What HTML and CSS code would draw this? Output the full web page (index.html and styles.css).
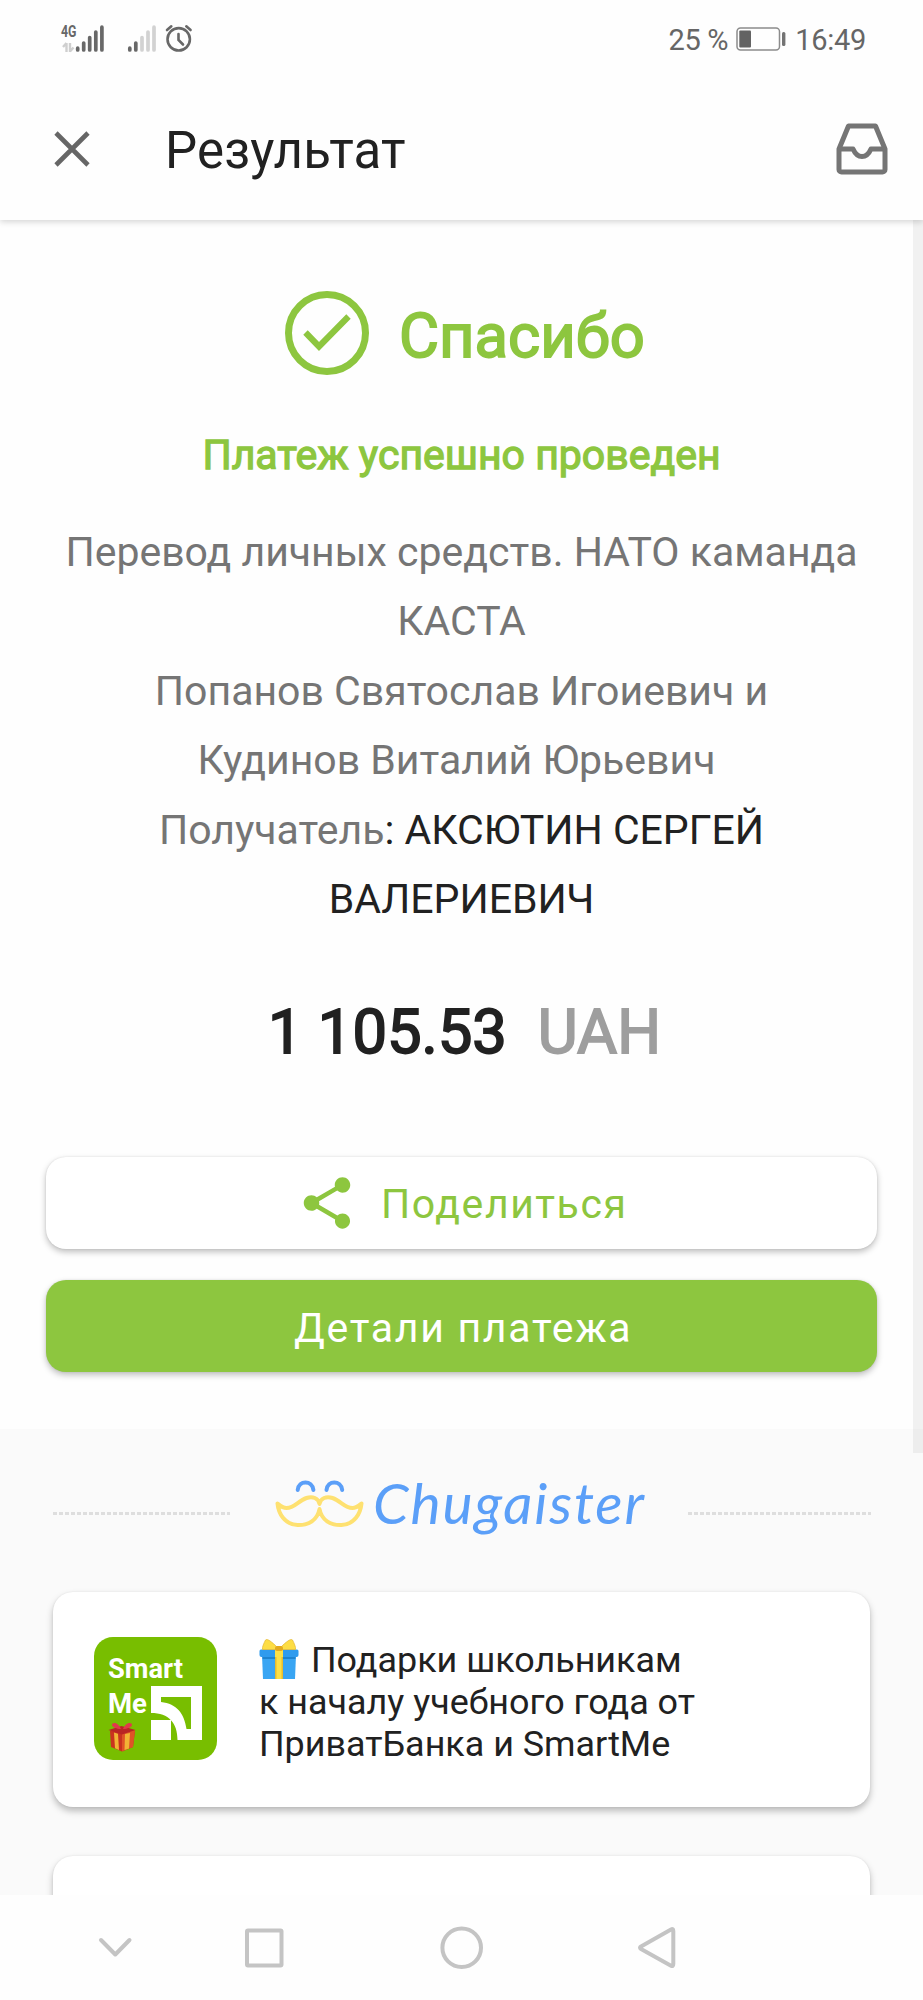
FILE: index.html
```html
<!DOCTYPE html>
<html lang="ru">
<head>
<meta charset="utf-8">
<title>Результат</title>
<link rel="stylesheet" href="styles.css">
</head>
<body>
<div class="screen">
  <div class="status">
    <svg class="status-left" width="160" height="32" viewBox="50 22 160 32">
      <text class="net" x="61" y="37" textLength="15.5" lengthAdjust="spacingAndGlyphs">4G</text>
      <g stroke="#cfcfcf" stroke-width="2.4" fill="none"><path d="M66.5 43v9M66.5 43l-3.5 4M70 43v9M70 51.500l3.500-4"/></g>
      <g stroke="#686868" stroke-width="3.7" stroke-linecap="round"><path d="M77.700 48.200v1.700M83.700 43v6.900M89.700 37.500v12.400M95.800 32v17.900M101.900 27.200v22.700"/><path d="M129.800 48.200v1.700M135.800 43v6.900"/></g>
      <path d="M142 37.500v12.400M148 32v17.900M154 27.200v22.700" stroke="#d2d2d2" stroke-width="3.700" stroke-linecap="round"/>
      <g fill="none" stroke="#686868" stroke-width="2.600" stroke-linecap="round"><circle cx="178.700" cy="39.300" r="11.200"/><path d="M178.500 34v6l4.500 4.500M167 30l4.300-3.700M186.300 26.300l4.300 3.700"/></g>
    </svg>
    <div class="status-right">
      <span class="pct">25 %</span>
      <svg width="50" height="26" viewBox="0 0 50 26"><rect x="1" y="2" width="42.500" height="22" rx="3.500" fill="none" stroke="#8c8c8c" stroke-width="1.500"/><rect x="3.300" y="4.500" width="11.700" height="17" rx="1" fill="#636363"/><rect x="46" y="6" width="3.400" height="14" rx="1.500" fill="#737373"/></svg>
      <span class="clock">16:49</span>
    </div>
  </div>
  <header class="bar">
    <svg class="close" width="36" height="36" viewBox="0 0 36 36"><path d="M2 2l32 32M34 2L2 34" stroke="#666" stroke-width="4.600"/></svg>
    <h1 class="title">Результат</h1>
    <svg class="inbox" width="52" height="52" viewBox="0 0 52 52" fill="none" stroke="#757575" stroke-width="5" stroke-linejoin="round"><path d="M12.500 3h27L49 26v20.500a2.500 2.500 0 0 1-2.500 2.500h-41A2.500 2.500 0 0 1 3 46.500V26z"/><path d="M4 26h13c2 4.500 5 7.500 9 7.500s7-3 9-7.500h13"/></svg>
  </header>
  <main class="content">
    <section class="result">
      <div class="thanks">
        <svg width="84" height="84" viewBox="0 0 84 84" fill="none" stroke="#8dc63f"><circle cx="42" cy="42" r="38.500" stroke-width="7"/><path d="M20.500 41.500L34 55.500 63.500 25.500" stroke-width="6.200"/></svg>
        <span class="thanks-text">Спасибо</span>
      </div>
      <p class="ok">Платеж успешно проведен</p>
      <div class="info">
        <div class="l1">Перевод личных средств. НАТО каманда</div>
        <div class="l2">КАСТА</div>
        <div class="l3">Попанов Святослав Игоиевич и</div>
        <div class="l4">Кудинов Виталий Юрьевич</div>
        <div class="l5">Получатель<b>: АКСЮТИН СЕРГЕЙ</b></div>
        <div class="l6"><b>ВАЛЕРИЕВИЧ</b></div>
      </div>
      <div class="sum"><span class="amount">1 105.53</span><span class="cur">UAH</span></div>
      <div class="btn share">
        <svg width="62" height="62" viewBox="0 0 24 24" fill="#8dc63f"><path d="M18 16.080c-.76 0-1.440.3-1.960.770L8.910 12.700c.05-.23.09-.46.09-.7s-.04-.47-.09-.7l7.050-4.110c.54.5 1.250.81 2.040.81 1.660 0 3-1.340 3-3s-1.340-3-3-3-3 1.340-3 3c0 .24.04.47.09.7L8.040 9.810C7.500 9.310 6.790 9 6 9c-1.660 0-3 1.340-3 3s1.340 3 3 3c.79 0 1.500-.31 2.040-.81l7.120 4.160c-.05.21-.08.43-.08.65 0 1.610 1.310 2.920 2.920 2.920s2.920-1.310 2.920-2.920-1.310-2.920-2.920-2.920z"/></svg>
        <span class="share-text">Поделиться</span>
      </div>
      <div class="btn details"><span class="details-text">Детали платежа</span></div>
    </section>
    <section class="offers">
      <div class="brand">
        <i class="dots dots-a"></i>
        <svg class="logo" width="380" height="100" viewBox="270 1460 380 100">
          <g fill="none" stroke="#5b9ff8" stroke-width="4" stroke-linecap="round"><path d="M297.700 1490c1-10 14.500-10 15.700 0M326.500 1490c1-10 14.500-10 15.700 0"/></g>
          <path d="M319.500 1504c-1-6-7-8-13-6-8 2.500-12 10-20 10-4 0-6-2-9-4.500 1 10 7 21 20 21.500 11 .5 20-5 22-16 2 11 11 16.500 22 16 13-.5 19-11.500 20-21.500-3 2.500-5 4.500-9 4.500-8 0-12-7.500-20-10-6-2-12 0-13 6z" fill="none" stroke="#fee171" stroke-width="4" stroke-linejoin="round"/>
          <text class="word" x="373" y="1524" textLength="271" lengthAdjust="spacing">Chugaister</text>
        </svg>
        <i class="dots dots-b"></i>
      </div>
      <article class="card">
        <svg width="123" height="123" viewBox="0 0 123 123">
          <rect width="123" height="123" rx="19" fill="#78be00"/>
          <text class="sm" x="14" y="41" textLength="75" lengthAdjust="spacingAndGlyphs">Smart</text>
          <text class="sm" x="14" y="75.500" textLength="39" lengthAdjust="spacingAndGlyphs">Me</text>
          <path d="M57 49h51v54H83.500C83.500 86 75 76 57 76z" fill="#fff"/>
          <path d="M67 60h30v32h-4.500C90 76 83 67 67 65z" fill="#78be00"/>
          <rect x="57" y="83" width="20" height="20" fill="#fff"/>
          <g><path d="M16 94l12-4 13 4-2 16-11 4.500L17 110z" fill="#c9331f"/><path d="M28 95l13-2-2 17-11 4.500z" fill="#df5427"/><path d="M20 95.500l4 1.200 1 16.300-4-1.700zM31 97l5-1-1 15.500-4.500 1.500z" fill="#f2b335"/><path d="M14.500 93l13-4 14 4-13.500 4.500z" fill="#b92524"/><path d="M27 92c-3-7-9-7-9-4 0 2 5 4 9 4zM29 92c3-7 9-7 9-4 0 2-5 4-9 4z" fill="#e2384a"/></g>
        </svg>
        <div class="card-text">
          <div class="c1"><svg width="40" height="40" viewBox="0 0 40 40"><path d="M3 16h34l-1 24H4z" fill="#39a5f3"/><path d="M.5 12q0-1.500 1.500-1.500h36q1.500 0 1.500 1.500v4q0 2-2 2h-35q-2 0-2-2z" fill="#2f9bee"/><path d="M3.500 18h33v2h-33z" fill="#1e83cf"/><path d="M16 10h8v30h-8z" fill="#fde047"/><path d="M16 18h1.500v22H16zM22.500 18H24v22h-1.500z" fill="#e8bd2e"/><path d="M18 8C13 3 8-1 6.500 1 5 4 3 8 3.500 10.500h14zM22 8c5-5 10-9 11.500-7 1.500 3 3.500 7 3 9.500h-14z" fill="#fddd45" stroke="#e3b62d" stroke-width=".7"/><rect x="16" y="7" width="8" height="5" rx="2" fill="#e3aa1e"/></svg><span>Подарки школьникам</span></div>
          <div class="c2">к началу учебного года от</div>
          <div class="c3">ПриватБанка и SmartMe</div>
        </div>
      </article>
      <article class="card next"></article>
    </section>
    <i class="scroll"></i>
  </main>
  <nav class="nav">
    <svg width="923" height="104" viewBox="0 1895 923 104" fill="none" stroke="#c4c4c4" stroke-width="4" stroke-linejoin="round" stroke-linecap="round"><path d="M101 1940l14.300 14.500L129.500 1940"/><rect x="247" y="1930.500" width="34.500" height="35" rx="1"/><circle cx="461.700" cy="1947.700" r="19.300"/><path d="M641 1929.500q2.300-1.200 2.300 1.500v33q0 3-2.300 1.700L641 1965.700 611 1949q-2-1.300 0-2.600z" transform="translate(30)"/></svg>
  </nav>
</div>
</body>
</html>
```
FILE: styles.css
```css
* { box-sizing: border-box; }
body { margin: 0; background: #fdfdfd; font-family: Roboto, sans-serif; color: #212121; }
.screen { width: 923px; height: 2000px; overflow: hidden; display: flex; flex-direction: column; background: #fefefe; }
svg { display: block; flex: none; }

.status { height: 78px; flex: none; display: flex; justify-content: space-between; padding: 22px 57px 0 50px; }
.net { font: 700 16px "Roboto", sans-serif; fill: #686868; }
.status-right { display: flex; align-items: center; height: 34px; color: #666; font-size: 29px; letter-spacing: -.3px; line-height: 34px; white-space: nowrap; }
.status-right svg { margin: 0 9px 0 8px; }
.pct, .clock { position: relative; top: 1px; }

.bar { height: 142px; flex: none; display: flex; align-items: flex-start; position: relative; z-index: 2; background: #fefefe; box-shadow: 0 2px 6px rgba(0,0,0,.16); clip-path: inset(0 0 -14px 0); padding-left: 54px; }
.close { margin-top: 53px; }
.title { margin: 43px 0 0 75px; font-size: 51px; line-height: 60px; font-weight: 400; letter-spacing: .15px; }
.inbox { margin: 45px 35px 0 auto; }

.content { height: 1675px; flex: none; position: relative; overflow: hidden; }
.scroll { position: absolute; right: 0; top: 0; width: 10px; height: 1233px; background: rgba(0,0,0,.05); }
.result { height: 1209px; padding: 71px 46px 0; text-align: center; white-space: nowrap; }
.thanks { display: flex; height: 84px; padding-left: 239px; align-items: flex-start; }
.thanks-text { margin: 7px 0 0 30px; font-size: 61.500px; line-height: 76px; color: #8dc63f; -webkit-text-stroke: 1.800px currentColor; }
.ok { margin: 55px 0 0; font-size: 41px; line-height: 50px; color: #8dc63f; -webkit-text-stroke: 1.300px currentColor; }
.info { margin-top: 38px; font-size: 41px; line-height: 69.400px; color: #757575; }
.info b { font-weight: 400; color: #212121; }
.l4 { margin-right: 10px; }
.sum { display: flex; height: 76px; margin-top: 60px; padding-left: 222px; font-size: 61.500px; line-height: 76px; -webkit-text-stroke: 1.800px currentColor; }
.cur { margin-left: 31px; color: #9e9e9e; }
.btn { display: flex; align-items: center; height: 92px; border-radius: 20px; font-size: 41px; letter-spacing: 1.550px; box-shadow: 0 3px 6px rgba(0,0,0,.25), 0 0 2px rgba(0,0,0,.1); }
.share { margin-top: 87px; padding-left: 250px; color: #8dc63f; background: #fff; }
.share-text { margin: 2px 0 0 23px; }
.details { margin-top: 31px; padding-left: 248px; color: #fff; background: #8dc63f; letter-spacing: 1.700px; }
.details-text { margin-top: 3px; }

.offers { height: 466px; background: #fafafa; padding: 0 53px; }
.brand { display: flex; height: 163px; align-items: flex-start; }
.dots { flex: none; height: 3px; margin-top: 83px; background: repeating-linear-gradient(90deg, #dedede 0 4px, transparent 4px 6px); }
.dots-a { width: 177px; }
.dots-b { width: 183px; margin-left: 38px; }
.logo { margin: 31px 0 0 40px; }
.word { font: italic 400 57px Lato, sans-serif; fill: #5b9ff8; }
.card { display: flex; height: 215px; padding: 45px 0 0 41px; border-radius: 20px; background: #fff; box-shadow: 0 4px 7px rgba(0,0,0,.26), 0 0 2px rgba(0,0,0,.08); }
.card-text { margin: 2px 0 0 42px; font-size: 35.900px; line-height: 42px; white-space: nowrap; }
.c1 { display: flex; gap: 12px; }
.sm { font: 700 28px Roboto, sans-serif; fill: #fff; }
.next { margin-top: 49px; }

.nav { height: 105px; flex: none; background: #fefefe; }
```
